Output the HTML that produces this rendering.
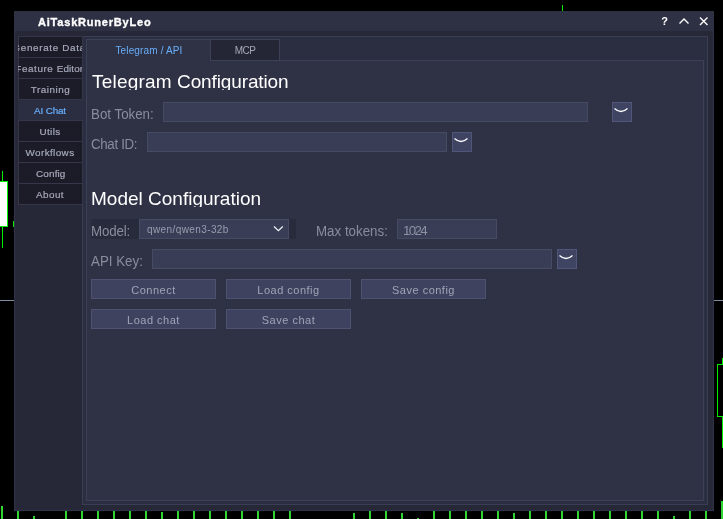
<!DOCTYPE html>
<html>
<head>
<meta charset="utf-8">
<style>
html,body{margin:0;padding:0;background:#000;}
body{width:723px;height:519px;position:relative;overflow:hidden;font-family:"Liberation Sans",sans-serif;}
.a{position:absolute;box-sizing:border-box;}
.g{background:#00ee00;width:1px;}
.g2{background:#31d631;width:2px;}
#win{left:14px;top:11px;width:700px;height:500px;background:#262838;border:1px solid #30334a;border-top:none;}
#tb{left:14px;top:11px;width:700px;height:20px;background:#2e3144;}
#title{left:38px;top:13px;height:18px;line-height:18px;font-size:11px;font-weight:bold;color:#fff;letter-spacing:0.8px;white-space:nowrap;-webkit-text-stroke:0.35px #fff;}
#outer{left:82px;top:36px;width:626px;height:469px;border:1px solid #3a3e52;background:#2b2e40;}
#pane{left:86px;top:60px;width:618px;height:441px;border:1px solid #3d4158;background:#2f3245;}
.st{left:18px;width:65px;height:22px;background:#1b1c28;border:1px solid #34374a;color:#a6a9ba;font-size:9.9px;line-height:20px;text-align:center;white-space:nowrap;letter-spacing:0.6px;}
.st i{position:absolute;left:-1px;top:0;width:64px;height:20px;overflow:hidden;font-style:normal;display:block;-webkit-text-stroke:0.2px;}
.st span{position:absolute;left:50%;top:1px;transform:translateX(-50%);}
.st.sel{background:#2b2e40;border-color:#34374a transparent;color:#68aefa;}
.tt{top:39px;height:22px;font-size:10px;line-height:21px;text-align:center;white-space:nowrap;}
#t1{left:86px;width:125px;padding-left:1px;background:#2f3245;border:1px solid #3d4158;border-bottom:none;color:#68aefa;letter-spacing:0.15px;}
#t2{left:210px;width:70px;background:#242636;border:1px solid #3d4158;color:#a5a8b8;letter-spacing:-0.6px;}
.h{left:92px;height:19px;overflow:hidden;font-size:19px;line-height:22px;color:#fff;white-space:nowrap;}
.lb{left:91px;font-size:13.8px;line-height:21px;height:21px;color:#898c9b;white-space:nowrap;transform:scaleX(0.966);transform-origin:0 0;}
.in{height:20px;background:#393e56;border:1px solid #464b64;}
.eb{width:20px;height:20px;background:#3f4462;border:1px solid #50567a;}
.eb svg{position:absolute;left:-1px;top:-1px;}
.bt{width:125px;height:20px;background:#3e425e;border:1px solid #4d5273;color:#a1a4b7;font-size:11px;line-height:21px;overflow:hidden;text-align:center;letter-spacing:0.5px;white-space:nowrap;}
</style>
</head>
<body><div id="root" style="will-change:transform;position:absolute;left:0;top:0;width:723px;height:519px">
<!-- chart background bits -->
<div class="a g" style="left:562px;top:5px;height:6px"></div>
<div class="a g" style="left:2px;top:171px;height:77px"></div>
<div class="a" style="left:-1px;top:181px;width:9px;height:46px;background:#fff;border:1px solid #00ee00"></div>
<div class="a g" style="left:13px;top:221px;height:6px"></div>
<div class="a" style="left:0;top:300px;width:14px;height:1px;background:#7f8fa3"></div>
<div class="a" style="left:714px;top:300px;width:9px;height:1px;background:#7f8fa3"></div>
<div class="a g" style="left:722px;top:358px;height:90px"></div>
<div class="a" style="left:717px;top:364px;width:10px;height:53px;background:#000;border:1px solid #00ee00"></div>
<div class="a g2" style="left:1px;top:506px;height:13px"></div><div class="a g2" style="left:17px;top:511px;height:8px"></div><div class="a g2" style="left:33px;top:516px;height:3px"></div><div class="a g2" style="left:65px;top:511px;height:8px"></div><div class="a g2" style="left:81px;top:511px;height:8px"></div><div class="a g2" style="left:97px;top:511px;height:8px"></div><div class="a g2" style="left:113px;top:511px;height:8px"></div><div class="a g2" style="left:129px;top:511px;height:8px"></div><div class="a g2" style="left:145px;top:511px;height:8px"></div><div class="a g2" style="left:161px;top:512px;height:7px"></div><div class="a g2" style="left:177px;top:511px;height:8px"></div><div class="a g2" style="left:193px;top:511px;height:8px"></div><div class="a g2" style="left:209px;top:511px;height:8px"></div><div class="a g2" style="left:225px;top:511px;height:8px"></div><div class="a g2" style="left:241px;top:511px;height:8px"></div><div class="a g2" style="left:257px;top:511px;height:8px"></div><div class="a g2" style="left:273px;top:511px;height:8px"></div><div class="a g2" style="left:289px;top:511px;height:8px"></div><div class="a g2" style="left:353px;top:513px;height:6px"></div><div class="a g2" style="left:369px;top:511px;height:8px"></div><div class="a g2" style="left:385px;top:511px;height:8px"></div><div class="a g2" style="left:401px;top:513px;height:6px"></div><div class="a g2" style="left:417px;top:518px;height:1px"></div><div class="a g2" style="left:433px;top:511px;height:8px"></div><div class="a g2" style="left:449px;top:511px;height:8px"></div><div class="a g2" style="left:465px;top:511px;height:8px"></div><div class="a g2" style="left:481px;top:511px;height:8px"></div><div class="a g2" style="left:497px;top:511px;height:8px"></div><div class="a g2" style="left:513px;top:513px;height:6px"></div><div class="a g2" style="left:529px;top:511px;height:8px"></div><div class="a g2" style="left:545px;top:511px;height:8px"></div><div class="a g2" style="left:561px;top:511px;height:8px"></div><div class="a g2" style="left:577px;top:511px;height:8px"></div><div class="a g2" style="left:593px;top:511px;height:8px"></div><div class="a g2" style="left:609px;top:511px;height:8px"></div><div class="a g2" style="left:625px;top:511px;height:8px"></div><div class="a g2" style="left:641px;top:511px;height:8px"></div><div class="a g2" style="left:657px;top:511px;height:8px"></div><div class="a g2" style="left:673px;top:516px;height:3px"></div><div class="a g2" style="left:689px;top:511px;height:8px"></div><div class="a g2" style="left:705px;top:511px;height:8px"></div><div class="a g2" style="left:721px;top:501px;height:18px"></div>

<div class="a" id="win"></div>
<div class="a" id="tb"></div>
<div class="a" id="title">AiTaskRunerByLeo</div>
<svg class="a" style="left:655px;top:11px" width="59" height="20" viewBox="0 0 59 20">
 <text x="9.5" y="13.6" font-family="Liberation Sans" font-weight="bold" font-size="11" fill="#fff" text-anchor="middle">?</text>
 <path d="M24.5,12.5 L29,8 L33.5,12.5" stroke="#fff" stroke-width="1.4" fill="none"/>
 <path d="M45,6.5 L52.5,14 M52.5,6.5 L45,14" stroke="#fff" stroke-width="1.4" fill="none"/>
</svg>

<div class="a" id="outer"></div>
<div class="a" id="pane"></div>

<!-- side tabs -->
<div class="a st" style="top:36px;letter-spacing:0.65px"><i><span style="left:-5.53px;transform:none"><u style="display:inline-block;text-decoration:none;transform:scaleX(0.72);transform-origin:100% 50%">G</u>enerate Data</span></i></div>
<div class="a st" style="top:57px;letter-spacing:0.58px"><i><span style="left:-2.71px;transform:none"><u style="display:inline-block;text-decoration:none;transform:scaleX(0.68);transform-origin:100% 50%">F</u>eature <b style="font-weight:normal;letter-spacing:0.12px">Editor</b></span></i></div>
<div class="a st" style="top:78px"><i><span style="letter-spacing:0.5px;margin-left:0.5px">Training</span></i></div>
<div class="a st sel" style="top:99px"><i><span style="letter-spacing:-0.15px">AI Chat</span></i></div>
<div class="a st" style="top:120px"><i><span style="letter-spacing:0.4px">Utils</span></i></div>
<div class="a st" style="top:141px"><i><span style="letter-spacing:0.4px">Workflows</span></i></div>
<div class="a st" style="top:162px"><i><span style="letter-spacing:0.15px;margin-left:0.8px">Config</span></i></div>
<div class="a st" style="top:183px"><i><span style="letter-spacing:0.45px">About</span></i></div>

<!-- top tabs -->
<div class="a tt" id="t1">Telegram / API</div>
<div class="a tt" id="t2">MCP</div>

<div class="a h" style="top:71px"><span style="letter-spacing:0.2px">Telegram</span> <span style="letter-spacing:-0.12px">Configuration</span></div>
<div class="a lb" style="top:104px">Bot Token:</div>
<div class="a in" style="left:163px;top:102px;width:425px"></div>
<div class="a eb" style="left:612px;top:102px"><svg width="20" height="20"><path d="M2.5,6.5 Q9,12.5 15.5,6.5" stroke="#fff" stroke-width="1.3" fill="none"/></svg></div>
<div class="a lb" style="top:134px;letter-spacing:-0.35px">Chat ID:</div>
<div class="a in" style="left:147px;top:132px;width:300px"></div>
<div class="a eb" style="left:452px;top:132px"><svg width="20" height="20"><path d="M2.5,6.5 Q9,12.5 15.5,6.5" stroke="#fff" stroke-width="1.3" fill="none"/></svg></div>

<div class="a h" style="top:188px;left:91px">Model Configuration</div>
<div class="a" style="left:91px;top:219px;width:205px;height:20px;background:#282b3c"></div>
<div class="a lb" style="top:221px;letter-spacing:-0.15px">Model:</div>
<div class="a in" style="left:139px;top:219px;width:150px;color:#9a9db0;font-size:10px;line-height:20px;padding-left:7px;letter-spacing:0.4px;overflow:hidden">qwen/qwen3-32b
 <svg class="a" style="left:133px;top:5.4px" width="12" height="8"><path d="M1,1.5 L5.4,5.7 L9.8,1.5" stroke="#eceef4" stroke-width="1.3" fill="none"/></svg>
</div>
<div class="a lb" style="left:316px;top:221px">Max tokens:</div>
<div class="a in" style="left:397px;top:219px;width:100px;color:#8e91a3;font-size:13.33px;line-height:20px;padding-left:5px;padding-top:1px;letter-spacing:-1.7px;overflow:hidden">1024</div>
<div class="a lb" style="top:251px">API Key:</div>
<div class="a in" style="left:152px;top:249px;width:400px"></div>
<div class="a eb" style="left:557px;top:249px"><svg width="20" height="20"><path d="M2.5,6.5 Q9,12.5 15.5,6.5" stroke="#fff" stroke-width="1.3" fill="none"/></svg></div>

<div class="a bt" style="left:91px;top:279px">Connect</div>
<div class="a bt" style="left:226px;top:279px">Load config</div>
<div class="a bt" style="left:361px;top:279px">Save config</div>
<div class="a bt" style="left:91px;top:309px">Load chat</div>
<div class="a bt" style="left:226px;top:309px">Save chat</div>
</div></body>
</html>
